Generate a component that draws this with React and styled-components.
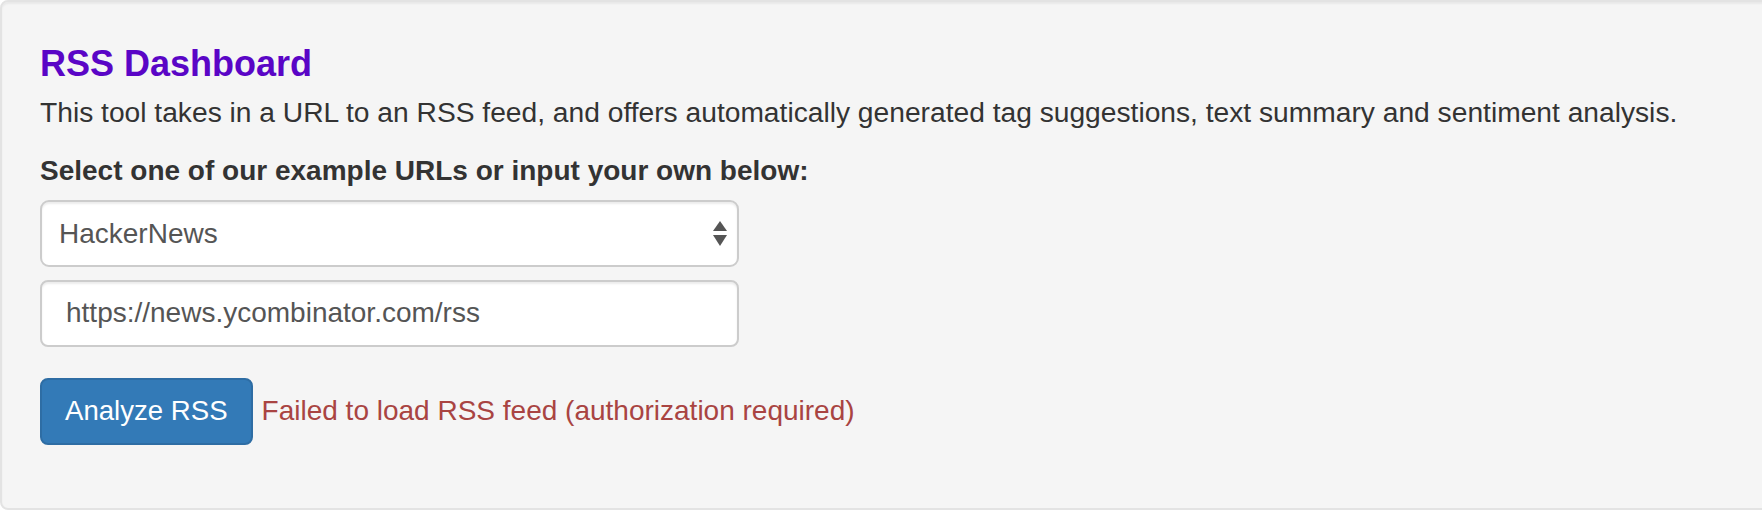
import React, { useState } from 'react';
import styled, { createGlobalStyle } from 'styled-components';

const GlobalStyle = createGlobalStyle`
  html, body {
    margin: 0;
    padding: 0;
    background: #ffffff;
    overflow: hidden;
  }
  body {
    font-family: "Liberation Sans", Arial, Helvetica, sans-serif;
    font-size: 28px;
    line-height: 1.42857;
    color: #333333;
  }
  * {
    box-sizing: border-box;
  }
`;

const Well = styled.div`
  width: 1800px;
  min-height: 510px;
  padding: 42px 38px 40px;
  background: #f5f5f5;
  border: 2px solid #e3e3e3;
  border-radius: 8px;
  box-shadow: inset 0 2px 2px rgba(0, 0, 0, 0.05);
`;

const Title = styled.h4`
  margin: 0 0 8px;
  font-size: 36px;
  line-height: 1.1;
  font-weight: bold;
  color: #5a05c6;
`;

const Intro = styled.p`
  margin: 0 0 19px;
  font-size: 28.2px;
  line-height: 40px;
`;

const Label = styled.label`
  display: block;
  margin-bottom: 9px;
  font-weight: bold;
`;

const FieldGroup = styled.div`
  width: 699px;
  display: flex;
  flex-direction: column;
  gap: 13px;
`;

const SelectWrap = styled.div`
  position: relative;
`;

const Select = styled.select`
  appearance: none;
  -webkit-appearance: none;
  display: block;
  width: 100%;
  height: 67px;
  padding: 0 60px 0 17px;
  font-family: inherit;
  font-size: 28px;
  color: #555555;
  background: #ffffff;
  border: 2px solid #cccccc;
  border-radius: 9px;
  box-shadow: inset 0 2px 2px rgba(0, 0, 0, 0.075);
  outline: none;
`;

const Arrows = styled.svg`
  position: absolute;
  right: 12px;
  top: 21px;
  pointer-events: none;
`;

const TextInput = styled.input`
  display: block;
  width: 100%;
  height: 67px;
  padding: 12px 24px;
  font-family: inherit;
  font-size: 28px;
  color: #555555;
  background: #ffffff;
  border: 2px solid #cccccc;
  border-radius: 8px;
  box-shadow: inset 0 2px 2px rgba(0, 0, 0, 0.075);
  outline: none;
`;

const ActionRow = styled.div`
  display: flex;
  align-items: center;
  margin-top: 31px;
`;

const Button = styled.button`
  height: 67px;
  padding: 0 23px;
  font-family: inherit;
  font-size: 27.6px;
  color: #ffffff;
  background: #337ab7;
  border: 2px solid #2e6da4;
  border-radius: 8px;
  cursor: pointer;
`;

const ErrorText = styled.span`
  margin-left: 9px;
  color: #a94442;
`;

const feeds = {
  HackerNews: 'https://news.ycombinator.com/rss',
};

const App = () => {
  const [feed, setFeed] = useState('HackerNews');
  const [url, setUrl] = useState(feeds.HackerNews);

  return (
    <>
      <GlobalStyle />
      <Well>
        <Title>RSS Dashboard</Title>
        <Intro>
          This tool takes in a URL to an RSS feed, and offers automatically generated tag suggestions, text summary and sentiment analysis.
        </Intro>
        <Label>Select one of our example URLs or input your own below:</Label>
        <FieldGroup>
          <SelectWrap>
            <Select
              value={feed}
              onChange={(e) => {
                setFeed(e.target.value);
                setUrl(feeds[e.target.value]);
              }}
            >
              {Object.keys(feeds).map((name) => (
                <option key={name} value={name}>{name}</option>
              ))}
            </Select>
            <Arrows width="14" height="25" viewBox="0 0 14 25">
              <polygon points="7,0 14,10 0,10" fill="#555555" />
              <polygon points="0,14 14,14 7,25" fill="#555555" />
            </Arrows>
          </SelectWrap>
          <TextInput value={url} onChange={(e) => setUrl(e.target.value)} />
        </FieldGroup>
        <ActionRow>
          <Button>Analyze RSS</Button>
          <ErrorText>Failed to load RSS feed (authorization required)</ErrorText>
        </ActionRow>
      </Well>
    </>
  );
};

export default App;
